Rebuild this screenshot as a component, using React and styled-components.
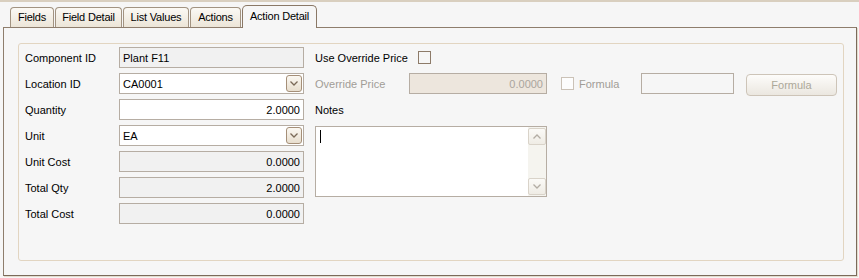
import React from 'react';
import styled, { createGlobalStyle, css } from 'styled-components';

const GlobalStyle = createGlobalStyle`
  html, body { margin: 0; padding: 0; }
  body {
    background: #f6f6f6;
    font-family: "Liberation Sans", Arial, sans-serif;
    font-size: 11px;
    color: #000;
  }
`;

const Window = styled.div`
  width: 859px;
  height: 278px;
  box-sizing: border-box;
  border-top: 2px solid #d9cfbf;
  background: #f6f6f6;
  display: flex;
  flex-direction: column;
`;

const TabStrip = styled.div`
  height: 25px;
  display: flex;
  align-items: flex-end;
  gap: 1px;
  padding-left: 10px;
`;

const Tab = styled.div`
  box-sizing: border-box;
  width: ${p => p.w}px;
  height: 20px;
  line-height: 19px;
  text-align: center;
  white-space: nowrap;
  letter-spacing: -0.2px;
  border: 1px solid #a29381;
  border-bottom: none;
  border-radius: 4px 4px 0 0;
  background: linear-gradient(#fbf9f4, #ece5d8);
  ${p => p.active && css`
    position: relative;
    z-index: 1;
    height: 23px;
    margin-bottom: -1px;
    line-height: 21px;
    border-color: #8a7866;
    border-radius: 5px 5px 0 0;
    background: #f6f6f6;
  `}
`;

const Panel = styled.div`
  flex: 1;
  margin: 0 2px 2px 3px;
  padding: 15px 12px 14px 14px;
  display: flex;
  background: #f6f6f6;
  border: 1px solid #8e7d6c;
  border-right-color: #7a6a5a;
  border-bottom-color: #7a6a5a;
  box-shadow: 1px 1px 0 #e4dccd;
`;

const GroupBox = styled.div`
  flex: 1;
  display: flex;
  gap: 11px;
  padding: 3px 6px 0;
  border: 1px solid #e2d5c1;
  border-radius: 3px;
`;

const LeftCol = styled.div`
  display: flex;
  flex-direction: column;
  gap: 5px;
`;

const Row = styled.div`
  display: grid;
  grid-template-columns: 94px 185px;
  height: 21px;
  align-items: center;
`;

const Label = styled.span`
  white-space: nowrap;
  color: ${p => (p.disabled ? '#a19d97' : '#000')};
`;

const Field = styled.div`
  box-sizing: border-box;
  height: 21px;
  width: ${p => p.w || 185}px;
  display: flex;
  align-items: center;
  justify-content: ${p => (p.right ? 'flex-end' : 'flex-start')};
  padding: 0 3px;
  border: 1px solid #b6ada3;
  background: ${p => p.bg || '#fff'};
  color: ${p => p.color || '#000'};
  white-space: nowrap;
`;

const ComboField = styled(Field)`
  padding: 0 1px 0 3px;
  justify-content: space-between;
`;

const ComboButton = styled.div`
  box-sizing: border-box;
  width: 16px;
  height: 17px;
  display: flex;
  align-items: center;
  justify-content: center;
  border: 1px solid #a58f78;
  border-radius: 3px;
  background: linear-gradient(#fbf8f2, #e8dece);
`;

const Chevron = ({ up, color = '#7b6a58' }) => (
  <svg width="8" height="5" viewBox="0 0 8 5">
    <polyline
      points={up ? '0.5,4.5 4,1 7.5,4.5' : '0.5,0.5 4,4 7.5,0.5'}
      fill="none"
      stroke={color}
      strokeWidth="1.3"
    />
  </svg>
);

const RightCol = styled.div`
  display: flex;
  flex-direction: column;
`;

const FlexRow = styled.div`
  display: flex;
  align-items: center;
  height: ${p => p.h || 21}px;
  margin-top: ${p => p.mt || 0}px;
`;

const CheckBox = styled.div`
  box-sizing: border-box;
  width: 13px;
  height: 13px;
  margin-left: ${p => p.ml || 0}px;
  border: 1px solid ${p => (p.disabled ? '#cbc2b7' : '#8d7b69')};
  background: ${p => (p.disabled ? '#fdfdfd' : '#f6f6f6')};
`;

const FixedLabel = styled(Label)`
  width: ${p => p.w}px;
  margin-left: ${p => p.ml || 0}px;
`;

const Button = styled.div`
  box-sizing: border-box;
  width: 91px;
  height: 22px;
  margin-left: 12px;
  margin-top: 2px;
  display: flex;
  align-items: center;
  justify-content: center;
  border: 1px solid #cdc4b8;
  border-radius: 4px;
  background: linear-gradient(#fdfcfa, #ebe7e0);
  color: #aca899;
`;

const Notes = styled.div`
  box-sizing: border-box;
  width: 232px;
  height: 71px;
  margin-top: 6px;
  display: flex;
  border: 1px solid #b6ada3;
  background: #fff;
`;

const NotesText = styled.div`
  flex: 1;
  padding: 3px 4px;
`;

const Caret = styled.div`
  width: 1px;
  height: 13px;
  background: #000;
`;

const ScrollBar = styled.div`
  width: 18px;
  display: flex;
  flex-direction: column;
  justify-content: space-between;
  padding: 1px 0;
  background: #f5f4ef;
`;

const ScrollButton = styled.div`
  box-sizing: border-box;
  height: 17px;
  display: flex;
  align-items: center;
  justify-content: center;
  border: 1px solid #d9d3c9;
  border-radius: 2px;
  background: linear-gradient(#fbfaf7, #efece5);
`;

const tabs = [
  { name: 'Fields', w: 44 },
  { name: 'Field Detail', w: 67 },
  { name: 'List Values', w: 66 },
  { name: 'Actions', w: 51 },
  { name: 'Action Detail', w: 75, active: true },
];

const fields = [
  { label: 'Component ID', value: 'Plant F11', bg: '#f1f1f1' },
  { label: 'Location ID', value: 'CA0001', combo: true },
  { label: 'Quantity', value: '2.0000', right: true },
  { label: 'Unit', value: 'EA', combo: true },
  { label: 'Unit Cost', value: '0.0000', right: true, bg: '#f1f1f1' },
  { label: 'Total Qty', value: '2.0000', right: true, bg: '#f1f1f1' },
  { label: 'Total Cost', value: '0.0000', right: true, bg: '#f1f1f1' },
];

export default function App() {
  return (
    <Window>
      <GlobalStyle />
      <TabStrip>
        {tabs.map(t => (
          <Tab key={t.name} w={t.w} active={t.active}>{t.name}</Tab>
        ))}
      </TabStrip>
      <Panel>
        <GroupBox>
          <LeftCol>
            {fields.map(f => (
              <Row key={f.label}>
                <Label>{f.label}</Label>
                {f.combo ? (
                  <ComboField>
                    {f.value}
                    <ComboButton><Chevron /></ComboButton>
                  </ComboField>
                ) : (
                  <Field right={f.right} bg={f.bg}>{f.value}</Field>
                )}
              </Row>
            ))}
          </LeftCol>
          <RightCol>
            <FlexRow>
              <Label>Use Override Price</Label>
              <CheckBox ml={10} />
            </FlexRow>
            <FlexRow mt={4} h={23}>
              <FixedLabel w={94} disabled>Override Price</FixedLabel>
              <Field w={138} right bg="#ede6dd" color="#aaa59e">0.0000</Field>
              <CheckBox ml={14} disabled />
              <FixedLabel w={62} ml={5} disabled>Formula</FixedLabel>
              <Field w={93} bg="#f6f6f6" />
              <Button>Formula</Button>
            </FlexRow>
            <FlexRow mt={4}>
              <Label>Notes</Label>
            </FlexRow>
            <Notes>
              <NotesText><Caret /></NotesText>
              <ScrollBar>
                <ScrollButton><Chevron up color="#b3ada4" /></ScrollButton>
                <ScrollButton><Chevron color="#b3ada4" /></ScrollButton>
              </ScrollBar>
            </Notes>
          </RightCol>
        </GroupBox>
      </Panel>
    </Window>
  );
}
